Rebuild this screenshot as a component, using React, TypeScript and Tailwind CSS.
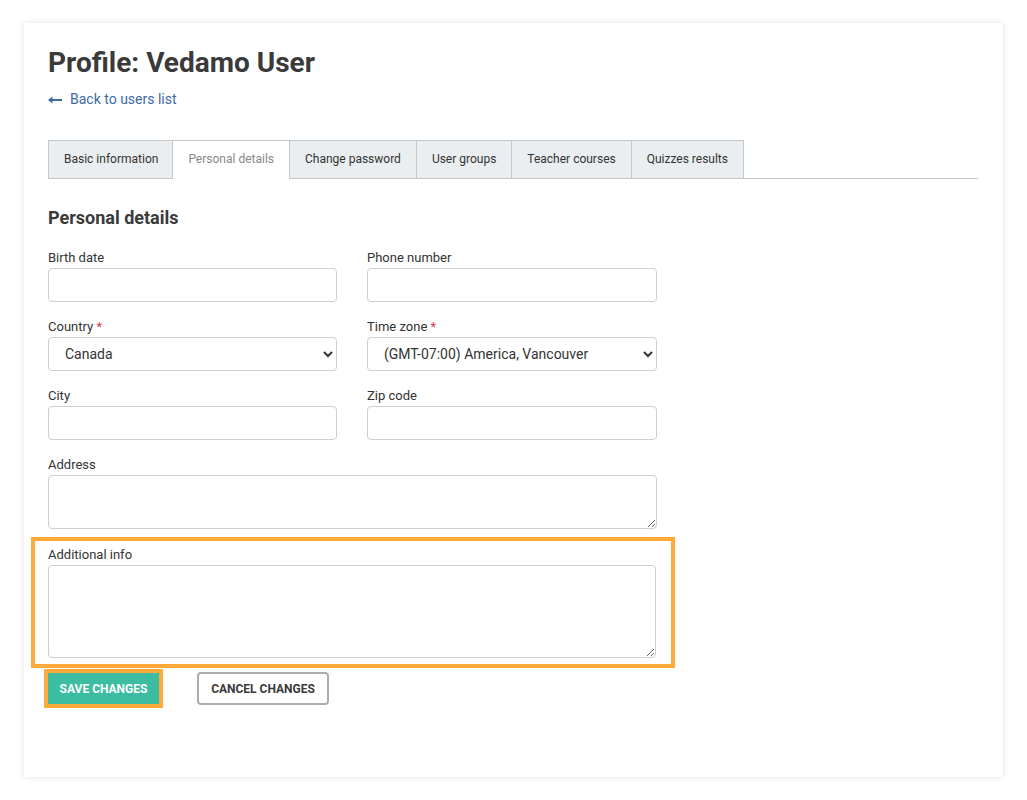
import React from 'react';

const tabs = [
	'Basic information',
	'Personal details',
	'Change password',
	'User groups',
	'Teacher courses',
	'Quizzes results'
];

function Field({
	label,
	required,
	children
}: {
	label: string;
	required?: boolean;
	children: React.ReactNode;
}) {
	return (
		<div className="flex flex-col">
			<label className="text-[13px] leading-[15px] text-[#333] mb-[3px]">
				{label}
				{required && <span className="text-[#e8334a]"> *</span>}
			</label>
			{children}
		</div>
	);
}

const inputCls =
	'block h-[34px] w-full rounded-[4px] border border-[#cfcfcf] bg-white px-[12px] text-[14px] text-[#333] outline-none';
const selectCls =
	'block h-[34px] w-full rounded-[4px] border border-[#cfcfcf] bg-white pl-[12px] pr-[4px] text-[14px] text-[#333] outline-none';

export default function App() {
	return (
		<div className="min-h-[800px] bg-white pt-[23px] pl-[24px] font-['Roboto',sans-serif] text-[#333]">
			<div className="w-[979px] h-[754px] bg-white shadow-[0_0_6px_rgba(0,0,0,0.12)] px-[24px] pt-[23px]">
				<h1 className="text-[28px] leading-[34px] font-bold text-[#3a3a3a]">Profile: Vedamo User</h1>
				<a href="#" className="mt-[10px] flex items-center gap-[8px] text-[14px] leading-[18px] text-[#3d6aa3]">
					<svg width="14" height="8" viewBox="0 0 14 8" className="mt-[1px]">
						<path d="M1 4H14" stroke="#3d6aa3" strokeWidth="2" />
						<path d="M0 4L4.5 0.5V7.5Z" fill="#3d6aa3" />
					</svg>
					Back to users list
				</a>

				<div className="mt-[32px] flex w-[930px] border-b border-[#c3c7ca]">
					{tabs.map((t) => {
						const active = t === 'Personal details';
						return (
							<div
								key={t}
								className={
									active
										? '-mb-px h-[39px] border border-l-0 border-[#c3c7ca] border-b-white bg-white px-[15px] text-[12px] leading-[37px] text-[#888]'
										: t === 'Basic information'
										? '-mb-px h-[39px] border border-[#c3c7ca] bg-[#ebeef0] pl-[15px] pr-[14px] text-[12px] leading-[37px] text-[#333]'
										: '-mb-px h-[39px] border border-l-0 border-[#c3c7ca] bg-[#ebeef0] px-[15px] text-[12px] leading-[37px] text-[#333]'
								}
							>
								{t}
							</div>
						);
					})}
				</div>

				<h2 className="mt-[28px] text-[18px] leading-[22px] font-bold text-[#3a3a3a]">Personal details</h2>

				<div className="mt-[21px] grid w-[609px] grid-cols-[289px_290px] gap-x-[30px] gap-y-[17px]">
					<Field label="Birth date">
						<input className={inputCls} />
					</Field>
					<Field label="Phone number">
						<input className={inputCls} />
					</Field>
					<Field label="Country" required>
						<select className={selectCls} defaultValue="Canada">
							<option>Canada</option>
						</select>
					</Field>
					<Field label="Time zone" required>
						<select className={selectCls} defaultValue="(GMT-07:00) America, Vancouver">
							<option>(GMT-07:00) America, Vancouver</option>
						</select>
					</Field>
					<Field label="City">
						<input className={inputCls} />
					</Field>
					<Field label="Zip code">
						<input className={inputCls} />
					</Field>
					<div className="col-span-2">
						<Field label="Address">
							<textarea className="block h-[54px] w-full rounded-[4px] border border-[#cfcfcf] bg-white px-[12px] py-[6px] text-[14px] outline-none" />
						</Field>
					</div>
				</div>

				<div className="mt-[8px] -ml-[17px] w-[644px] border-[4px] border-[#ffa938] pl-[13px] pr-[15px] pt-[6px] pb-[6px]">
					<Field label="Additional info">
						<textarea className="block h-[93px] w-full rounded-[4px] border border-[#cfcfcf] bg-white px-[12px] py-[6px] text-[14px] outline-none" />
					</Field>
				</div>

				<div className="mt-[1px] flex items-center">
					<div className="-ml-[4px] border-[4px] border-[#ffa938]">
						<button className="block h-[31px] w-[111px] bg-[#3cbca0] text-[12px] font-bold uppercase text-white">
							Save changes
						</button>
					</div>
					<button className="ml-[34px] h-[33px] w-[132px] rounded-[4px] border-2 border-[#a9adb2] bg-white text-[12px] font-bold uppercase text-[#3a3a3a]">
						Cancel changes
					</button>
				</div>
			</div>
		</div>
	);
}
